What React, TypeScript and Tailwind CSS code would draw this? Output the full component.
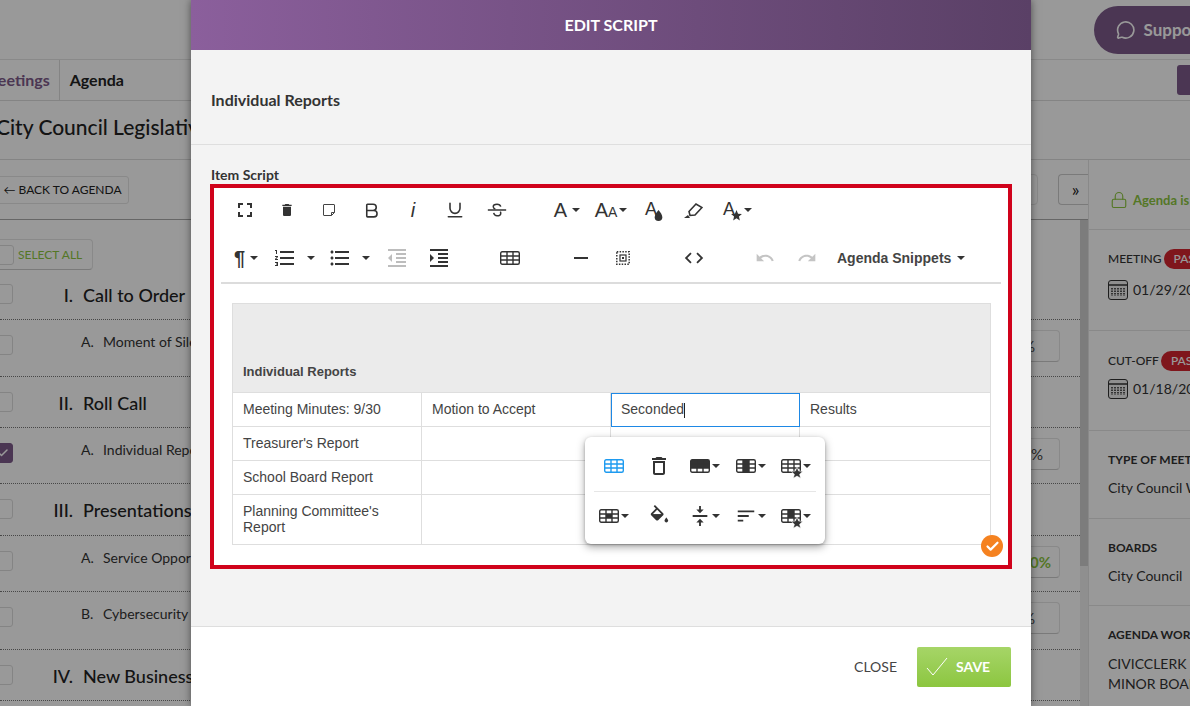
import React from 'react';
import { Bold, Underline, MessageCircle, Lock, Check } from 'lucide-react';

const Caret = () => (
  <span className="inline-block w-0 h-0 border-x-[4px] border-t-[4px] border-x-transparent border-t-[#333]" />
);

const Mat = ({ d, size = 20, color = '#333' }: { d: string; size?: number; color?: string }) => (
  <svg width={size} height={size} viewBox="0 0 24 24" fill={color}>
    <path d={d} />
  </svg>
);

const STAR = 'M12 17.27L18.18 21l-1.64-7.03L22 9.24l-7.19-.61L12 2 9.19 8.63 2 9.24l5.46 4.73L5.82 21z';

// table glyph for the popup, cells are [col,row]
const TableGlyph = ({ fill = [], color = '#333', star = false }: { fill?: number[][]; color?: string; star?: boolean }) => (
  <span className="relative inline-block w-[20px] h-[14px]">
    <svg width="20" height="14" viewBox="0 0 20 14" fill="none" stroke={color} strokeWidth="1.4">
      <rect x="0.7" y="0.7" width="18.6" height="12.6" rx="1.5" />
      {fill.map(([c, r]) => (
        <rect key={`${c}-${r}`} x={1 + c * 6} y={1 + r * 4} width="6" height="4" fill={color} stroke="none" />
      ))}
      <path d="M0.7 5H19.3M0.7 9H19.3M7 0.7V13.3M13 0.7V13.3" />
    </svg>
    {star && (
      <span className="absolute left-[9px] top-[7px]">
        <svg width="14" height="14" viewBox="0 0 24 24" fill="#333" stroke="#fff" strokeWidth="1">
          <path d={STAR} />
        </svg>
      </span>
    )}
  </span>
);

const Btn = ({ className, children }: { className: string; children: React.ReactNode }) => (
  <div className={`flex items-center justify-center shrink-0 h-full ${className}`}>{children}</div>
);

const Toolbar = () => (
  <div className="mx-[7px] border-b-2 border-[#dcdcdc] pl-[3px] text-[#333] font-['Liberation_Sans',sans-serif]">
    <div className="flex items-center h-[44px] mb-[2px]">
      <Btn className="w-[42px]"><Mat size={24} d="M7 14H5v5h5v-2H7v-3zm-2-4h2V7h3V5H5v5zm12 7h-3v2h5v-5h-2v3zM14 5v2h3v3h2V5h-5z" /></Btn>
      <Btn className="w-[42px]"><Mat size={16} d="M6 19c0 1.100.9 2 2 2h8c1.100 0 2-.9 2-2V7H6v12zM19 4h-3.500l-1-1h-5l-1 1H5v2h14V4z" /></Btn>
      <Btn className="w-[42px]">
        <svg width="14" height="14" viewBox="0 0 14 14" fill="none" stroke="#444" strokeWidth="1">
          <path d="M2 1.500h10a.5.5 0 0 1 .5.5v7.500l-3 3H2a.5.5 0 0 1-.5-.5V2a.5.5 0 0 1 .5-.5zM12.500 9.500h-3v3" />
        </svg>
      </Btn>
      <Btn className="w-[42px]"><Bold size={19} strokeWidth={2} /></Btn>
      <Btn className="w-[42px]"><span className="italic text-[20px] leading-none">i</span></Btn>
      <Btn className="w-[42px]"><Underline size={20} strokeWidth={1.9} /></Btn>
      <Btn className="w-[42px]">
        <svg width="20" height="20" viewBox="0 0 24 24" fill="none" stroke="#333" strokeWidth="1.8">
          <path d="M16.500 8C16 6 14.300 5 12 5 9.500 5 7.500 6.200 7.500 8c0 1.500 1 2.300 2.500 3M8 15.500C8.500 17.500 10 19 12 19c2.800 0 4.500-1.200 4.500-3.200 0-.7-.2-1.300-.5-1.800" />
          <path d="M1 12h22" />
        </svg>
      </Btn>
      <div className="w-[26px] shrink-0" />
      <Btn className="w-[46px] gap-[5px]"><span className="text-[20px] leading-none">A</span><Caret /></Btn>
      <Btn className="w-[40px] gap-[2px] pl-[2px]"><span className="text-[20px] leading-none">A<span className="text-[14px]">A</span></span><Caret /></Btn>
      <Btn className="w-[42px] pl-[6px]">
        <span className="relative w-[18px] h-[20px]">
          <span className="absolute left-0 top-0 text-[18px] leading-none">A</span>
          <span className="absolute left-[7px] top-[9px]"><Mat size={13} d="M12 2s7 8 7 13a7 7 0 0 1-14 0c0-5 7-13 7-13z" /></span>
        </span>
      </Btn>
      <Btn className="w-[42px]">
        <svg width="20" height="17" viewBox="0 0 20 17" fill="none" stroke="#333" strokeWidth="1.600">
          <path d="M6 9.500L13 2l6 3.500-7 7.500-5 .5-1-4z" />
          <path d="M1 16l4-3 2 3H1z" fill="#333" stroke="none" />
        </svg>
      </Btn>
      <Btn className="w-[26px] ml-[6px] -mr-[2px]">
        <span className="relative w-[20px] h-[20px]">
          <span className="absolute left-0 top-0 text-[18px] leading-none">A</span>
          <span className="absolute left-[7px] top-[9px]"><Mat size={13} d={STAR} /></span>
        </span>
      </Btn>
      <Caret />
    </div>
    <div className="flex items-center h-[48px]">
      <Btn className="w-[42px] gap-[5px] pl-[2px]"><span className="text-[20px] font-bold leading-none">¶</span><Caret /></Btn>
      <Btn className="w-[56px] gap-[10px]"><Mat size={24} d="M2 17h2v.5H3v1h1v.5H2v1h3v-4H2v1zm1-9h1V4H2v1h1v3zm-1 3h1.800L2 13.100v.9h3v-1H3.200L5 10.900V10H2v1zm5-6v2h14V5H7zm0 14h14v-2H7v2zm0-6h14v-2H7v2z" /><Caret /></Btn>
      <Btn className="w-[54px] gap-[10px]"><Mat size={24} d="M4 10.500c-.83 0-1.500.67-1.500 1.500s.67 1.500 1.500 1.500 1.500-.67 1.500-1.500-.67-1.500-1.500-1.500zm0-6c-.83 0-1.500.67-1.500 1.500S3.170 7.500 4 7.500 5.500 6.830 5.500 6 4.830 4.500 4 4.500zm0 12c-.83 0-1.500.68-1.500 1.500s.68 1.500 1.500 1.500 1.500-.68 1.500-1.500-.67-1.500-1.500-1.500zM7 19h14v-2H7v2zm0-6h14v-2H7v2zm0-8v2h14V5H7z" /><Caret /></Btn>
      <Btn className="w-[42px]"><Mat size={24} color="#bdbdbd" d="M11 17h10v-2H11v2zm-8-5l4 4V8l-4 4zm0 9h18v-2H3v2zM3 3v2h18V3H3zm8 6h10V7H11v2zm0 4h10v-2H11v2z" /></Btn>
      <Btn className="w-[42px]"><Mat size={24} d="M3 21h18v-2H3v2zM3 8v8l4-4-4-4zm8 9h10v-2H11v2zM3 3v2h18V3H3zm8 6h10V7H11v2zm0 4h10v-2H11v2z" /></Btn>
      <div className="w-[29px] shrink-0" />
      <Btn className="w-[42px]"><TableGlyph /></Btn>
      <div className="w-[29px] shrink-0" />
      <Btn className="w-[42px]"><span className="block w-[14px] h-[2px] bg-[#333]" /></Btn>
      <Btn className="w-[42px]">
        <svg width="14" height="14" viewBox="0 0 14 14" fill="none" stroke="#333">
          <rect x="0.800" y="0.800" width="12.400" height="12.400" strokeWidth="1.500" strokeDasharray="1.500 1.300" />
          <rect x="4" y="4" width="6" height="6" strokeWidth="1.200" />
          <rect x="6" y="6" width="2" height="2" fill="#333" stroke="none" />
        </svg>
      </Btn>
      <div className="w-[29px] shrink-0" />
      <Btn className="w-[42px]"><Mat size={22} d="M9.400 16.600L4.800 12l4.600-4.600L8 6l-6 6 6 6 1.400-1.400zm5.200 0l4.600-4.600-4.600-4.600L16 6l6 6-6 6-1.400-1.400z" /></Btn>
      <div className="w-[29px] shrink-0" />
      <Btn className="w-[42px]"><Mat size={20} color="#c4c4c4" d="M12.500 8c-2.650 0-5.050.99-6.900 2.600L2 7v9h9l-3.620-3.620c1.390-1.160 3.160-1.880 5.120-1.880 3.540 0 6.550 2.310 7.600 5.500l2.370-.78C21.080 11.030 17.150 8 12.500 8z" /></Btn>
      <Btn className="w-[42px]"><Mat size={20} color="#c4c4c4" d="M18.400 10.600C16.550 8.990 14.150 8 11.500 8c-4.650 0-8.580 3.030-9.960 7.220L3.900 16c1.050-3.190 4.050-5.500 7.600-5.500 1.950 0 3.730.72 5.120 1.880L13 16h9V7l-3.600 3.600z" /></Btn>
      <div className="flex items-center gap-[6px] ml-[9px] text-[14px] font-bold text-[#444]">
        Agenda Snippets <Caret />
      </div>
    </div>
  </div>
);

const TablePopup = () => (
  <div className="absolute left-[371px] top-[249px] w-[240px] h-[107px] bg-white rounded-[6px] shadow-[0_3px_8px_rgba(0,0,0,0.35),0_1px_3px_rgba(0,0,0,0.2)] px-[6px]">
    <div className="grid grid-cols-5 h-[54px] pt-[4px] items-center justify-items-center">
      <TableGlyph color="#1e9bf0" />
      <Mat size={24} d="M6 19c0 1.100.9 2 2 2h8c1.100 0 2-.9 2-2V7H6v12zM8 9h8v10H8V9zm7.500-5l-1-1h-5l-1 1H5v2h14V4z" />
      <span className="flex items-center gap-[2px]"><TableGlyph fill={[[0, 0], [1, 0], [2, 0], [0, 1], [1, 1], [2, 1]]} /><Caret /></span>
      <span className="flex items-center gap-[2px]"><TableGlyph fill={[[1, 0], [1, 1], [1, 2]]} /><Caret /></span>
      <span className="flex items-center gap-[2px]"><TableGlyph star /><Caret /></span>
    </div>
    <div className="h-px bg-[#e6e6e6] mx-[3px]" />
    <div className="grid grid-cols-5 h-[52px] pb-[5px] items-center justify-items-center">
      <span className="flex items-center gap-[2px]"><TableGlyph fill={[[1, 1]]} /><Caret /></span>
      <svg width="22" height="22" viewBox="0 0 24 24" fill="#333">
        <path d="M16.560 8.940L7.620 0 6.210 1.410l2.380 2.380-5.150 5.150c-.59.59-.59 1.540 0 2.120l5.500 5.500c.29.29.68.44 1.060.44s.77-.15 1.060-.44l5.500-5.500c.59-.58.59-1.530 0-2.120zM5.210 10L10 5.210 14.790 10H5.210z" />
        <path d="M4.500 10h11l-5.500 5.500z" />
        <path d="M20 13.500s-2 2.170-2 3.500c0 1.100.9 2 2 2s2-.9 2-2c0-1.330-2-3.500-2-3.500z" />
      </svg>
      <span className="flex items-center gap-[1px]"><Mat size={22} d="M8 19h3v4h2v-4h3l-4-4-4 4zm8-14h-3V1h-2v4H8l4 4 4-4zM4 11v2h16v-2H4z" /><Caret /></span>
      <span className="flex items-center gap-[1px]"><Mat size={22} d="M3 18h6v-2H3v2zM3 6v2h18V6H3zm0 7h12v-2H3v2z" /><Caret /></span>
      <span className="flex items-center gap-[2px]"><TableGlyph star fill={[[1, 0], [1, 1]]} /><Caret /></span>
    </div>
  </div>
);

const cell = 'border border-[#dedede] px-[10px] pb-[2px]';

const ScriptTable = () => (
  <table className="table-fixed border-collapse w-[758px] ml-[18px] mt-[19px] font-['Liberation_Sans',sans-serif] text-[14px] leading-[16px] text-[#444]">
    <colgroup>
      <col className="w-[189px]" />
      <col className="w-[189px]" />
      <col className="w-[189px]" />
      <col className="w-[191px]" />
    </colgroup>
    <tbody>
      <tr className="h-[89px]">
        <td colSpan={4} className="border border-[#dedede] px-[10px] bg-[#ebebeb] align-bottom pb-[12px] text-[13px] font-bold">Individual Reports</td>
      </tr>
      <tr className="h-[34px]">
        <td className={cell}>Meeting Minutes: 9/30</td>
        <td className={cell}>Motion to Accept</td>
        <td className="border border-[#dedede] px-[10px] outline outline-1 outline-[#1e88e5] -outline-offset-1">
          Seconded<span className="inline-block w-px h-[15px] bg-[#222] align-middle" />
        </td>
        <td className={cell}>Results</td>
      </tr>
      <tr className="h-[34px]">
        <td className={cell}>Treasurer's Report</td><td className={cell} /><td className={cell} /><td className={cell} />
      </tr>
      <tr className="h-[34px]">
        <td className={cell}>School Board Report</td><td className={cell} /><td className={cell} /><td className={cell} />
      </tr>
      <tr className="h-[50px]">
        <td className={cell}>Planning Committee's Report</td><td className={cell} /><td className={cell} /><td className={cell} />
      </tr>
    </tbody>
  </table>
);

const Modal = () => (
  <div className="absolute left-[191px] top-0 w-[840px] h-[706px] flex flex-col bg-[#f3f3f3] shadow-[0_0_8px_rgba(0,0,0,0.5)] font-[Lato,sans-serif]">
    <div className="h-[50px] shrink-0 flex items-center justify-center bg-gradient-to-r from-[#8b5f9c] to-[#5a4066] text-white text-[16px] font-bold">
      EDIT SCRIPT
    </div>
    <div className="h-[95px] shrink-0 border-b border-[#dedede] pl-[20px] pt-[41px] text-[16px] font-bold leading-[18px] text-[#333]">
      Individual Reports
    </div>
    <div className="flex-1 px-[19px] pt-[22px]">
      <div className="text-[14px] font-bold leading-[16px] text-[#333] mb-[1px] pl-[1px]">Item Script</div>
      <div className="relative h-[385px] border-[4px] border-[#d0021b] bg-white">
        <Toolbar />
        <ScriptTable />
        <TablePopup />
        <div className="absolute right-[5px] bottom-[8px] w-[22px] h-[22px] rounded-full bg-[#f58220] flex items-center justify-center">
          <Check size={15} color="#fff" strokeWidth={3.5} />
        </div>
      </div>
    </div>
    <div className="h-[80px] shrink-0 bg-white border-t border-[#dedede] flex items-center justify-end pr-[20px] gap-[20px]">
      <span className="text-[14px] text-[#444]">CLOSE</span>
      <div className="w-[94px] h-[40px] rounded-[2px] bg-gradient-to-b from-[#a6d567] to-[#8cc63f] flex items-center text-white text-[14px] font-bold">
        <svg width="22" height="20" viewBox="0 0 22 20" fill="none" stroke="#fff" strokeWidth="1" className="ml-[9px] mr-[8px]">
          <path d="M1 11l6 7L21 1" />
        </svg>
        SAVE
      </div>
    </div>
  </div>
);

const rows = [
  { h: 'h-[38px]', num: 'I.', text: 'Call to Order', big: true, pt: 'pt-[2px]' },
  { h: 'h-[57px]', num: 'A.', text: 'Moment of Silence', chip: '0%', chipPad: 'pr-[24px]' },
  { h: 'h-[51px]', num: 'II.', text: 'Roll Call', big: true },
  { h: 'h-[56px]', num: 'A.', text: 'Individual Reports', chip: '14%', chipPad: 'pr-[16px]', checked: true },
  { h: 'h-[52px]', num: 'III.', text: 'Presentations', big: true },
  { h: 'h-[56px]', num: 'A.', text: 'Service Opportunities', chip: '100%', chipPad: 'pr-[8px]', green: true },
  { h: 'h-[58px]', num: 'B.', text: 'Cybersecurity', chip: '0%', chipPad: 'pr-[24px]' },
  { h: 'h-[51px]', num: 'IV.', text: 'New Business', big: true },
];

const AgendaRow = ({ r }: { r: (typeof rows)[number] }) => (
  <div className={`${r.h} ${r.pt ?? 'pt-[15px]'} flex items-start border-b border-dotted border-[#777]`}>
    <span className={`w-[20px] h-[20px] -ml-[7px] shrink-0 rounded-[3px] border flex items-center justify-center ${r.checked ? 'bg-[#7d5a8a] border-[#7d5a8a]' : 'bg-white border-[#ddd]'}`}>
      {r.checked && <Check size={12} color="#fff" strokeWidth={3} />}
    </span>
    {r.big ? (
      <div className="flex text-[18px] leading-[22px] font-medium text-[#222]">
        <span className="w-[60px] text-right">{r.num}</span>
        <span className="ml-[10px] whitespace-nowrap">{r.text}</span>
      </div>
    ) : (
      <div className="flex -mt-[1px] ml-[68px] text-[14px] leading-[16px] text-[#333]">
        <span className="w-[22px]">{r.num}</span>
        <span className="whitespace-nowrap">{r.text}</span>
      </div>
    )}
    {r.chip && (
      <span className={`ml-auto mr-[20px] -mt-[5px] w-[64px] h-[32px] flex items-center justify-end ${r.chipPad} rounded-[4px] border border-[#e4e4e4] border-b-[#ccc] text-[15px] whitespace-nowrap ${r.green ? 'font-bold text-[#8cc63f]' : 'text-[#444]'}`}>
        {r.chip}
      </span>
    )}
  </div>
);

const SideBlock = ({ h, children }: { h: string; children: React.ReactNode }) => (
  <div className={`${h} border-b border-[#e4e4e4] pl-[19px] whitespace-nowrap`}>{children}</div>
);

const Calendar = () => (
  <svg width="20" height="20" viewBox="0 0 20 20" fill="none" stroke="#333" className="shrink-0">
    <rect x="0.500" y="0.500" width="19" height="19" rx="2.500" fill="#eee" />
    <path d="M1 5h18" strokeWidth="1.500" />
    <path d="M4 8v8M7 8v8M10 8v8M13 8v8M16 8v8" strokeWidth="1.600" strokeDasharray="1.500 1" />
  </svg>
);

const SidePanel = () => (
  <div className="flex-1 border-l border-[#e4e4e4] text-[#333] text-[14px] leading-[18px]">
    <div className="h-[70px] border-b border-[#e4e4e4] flex items-center pl-[21px] pt-[10px] gap-[5px] text-[13px] font-bold text-[#8cc63f] whitespace-nowrap">
      <Lock size={18} strokeWidth={1.5} />
      Agenda is Unlocked
    </div>
    <SideBlock h="h-[101px]">
      <div className="flex items-center gap-[2px] text-[12px] font-medium pt-[19px]">
        MEETING <span className="bg-[#d42530] text-white rounded-full px-[10px] h-[20px] flex items-center">PAST</span>
      </div>
      <div className="flex items-center gap-[5px] mt-[11px] text-[14px]"><Calendar /> 01/29/2020</div>
    </SideBlock>
    <SideBlock h="h-[100px]">
      <div className="flex items-center gap-[2px] text-[12px] font-medium pt-[20px]">
        CUT-OFF <span className="bg-[#d42530] text-white rounded-full px-[10px] h-[20px] flex items-center">PAST</span>
      </div>
      <div className="flex items-center gap-[5px] mt-[8px] text-[14px]"><Calendar /> 01/18/2020</div>
    </SideBlock>
    <SideBlock h="h-[88px]">
      <div className="text-[12px] font-bold pt-[20px]">TYPE OF MEETING</div>
      <div className="mt-[10px]">City Council Work</div>
    </SideBlock>
    <SideBlock h="h-[87px]">
      <div className="text-[12px] font-bold pt-[20px]">BOARDS</div>
      <div className="mt-[10px]">City Council</div>
    </SideBlock>
    <div className="pl-[19px] whitespace-nowrap">
      <div className="text-[12px] font-bold pt-[20px]">AGENDA WORKFLOW</div>
      <div className="mt-[10px] leading-[20px]">CIVICCLERK<br />MINOR BOARD</div>
    </div>
  </div>
);

const Page = () => (
  <div className="w-[1190px] h-[706px] overflow-hidden bg-white font-[Lato,sans-serif] flex flex-col text-[#222]">
    <div className="h-[60px] shrink-0 border-b border-[#e4e4e4] flex justify-end pt-[6px]">
      <div className="w-[110px] h-[48px] -mr-[14px] rounded-l-full bg-[#7d5a8a] flex items-center pl-[22px] gap-[8px] text-white font-bold text-[17px]">
        <MessageCircle size={20} strokeWidth={2} />
        Support
      </div>
    </div>
    <div className="h-[41px] shrink-0 border-b border-[#ddd] flex items-center text-[16px]">
      <span className="font-bold text-[#7d5a8a] -ml-[17px] pr-[9px] h-full flex items-center border-r border-[#ddd]">Meetings</span>
      <span className="font-bold pl-[10px]">Agenda</span>
      <span className="ml-auto -mr-[10px] w-[23px] h-[30px] rounded-[3px] bg-[#7d5a8a]" />
    </div>
    <div className="h-[59px] shrink-0 border-b border-[#ddd] flex items-center pb-[7px] -ml-[4px] text-[21px] font-medium whitespace-nowrap">
      City Council Legislative Meeting
    </div>
    <div className="flex-1 flex min-h-0">
      <div className="w-[1088px] shrink-0 flex flex-col">
        <div className="h-[60px] shrink-0 border-b border-[#aaa] flex items-center -ml-[4px]">
          <span className="h-[28px] w-[133px] flex items-center justify-center rounded-[3px] border border-[#e4e4e4] text-[12px] whitespace-nowrap">← BACK TO AGENDA</span>
          <span className="ml-auto h-[31px] w-[40px] rounded-[4px] border border-[#e4e4e4] mr-[20px]" />
          <span className="h-[31px] w-[30px] flex items-center justify-center pl-[4px] rounded-l-[4px] border border-r-0 border-[#ccc] text-[18px]">»</span>
        </div>
        <div className="flex-1 flex min-h-0">
          <div className="w-[1080px] shrink-0 overflow-hidden">
            <div className="h-[62px] pt-[19px]">
              <div className="w-[100px] h-[31px] -ml-[7px] flex items-center rounded-[4px] border border-[#e4e4e4] border-b-[#ccc]">
                <span className="w-[20px] h-[20px] rounded-[3px] border border-[#ddd] bg-white" />
                <span className="ml-[4px] text-[12px] text-[#8cc63f] whitespace-nowrap">SELECT ALL</span>
              </div>
            </div>
            {rows.map((r) => (
              <AgendaRow key={r.text} r={r} />
            ))}
          </div>
          <div className="w-[8px] bg-[#efefef]">
            <div className="h-[346px] bg-[#cfcfcf]" />
          </div>
        </div>
      </div>
      <SidePanel />
    </div>
  </div>
);

export default function App() {
  return (
    <div className="relative w-[1190px] h-[706px] overflow-hidden">
      <Page />
      <div className="absolute inset-0 bg-black/40" />
      <Modal />
    </div>
  );
}
